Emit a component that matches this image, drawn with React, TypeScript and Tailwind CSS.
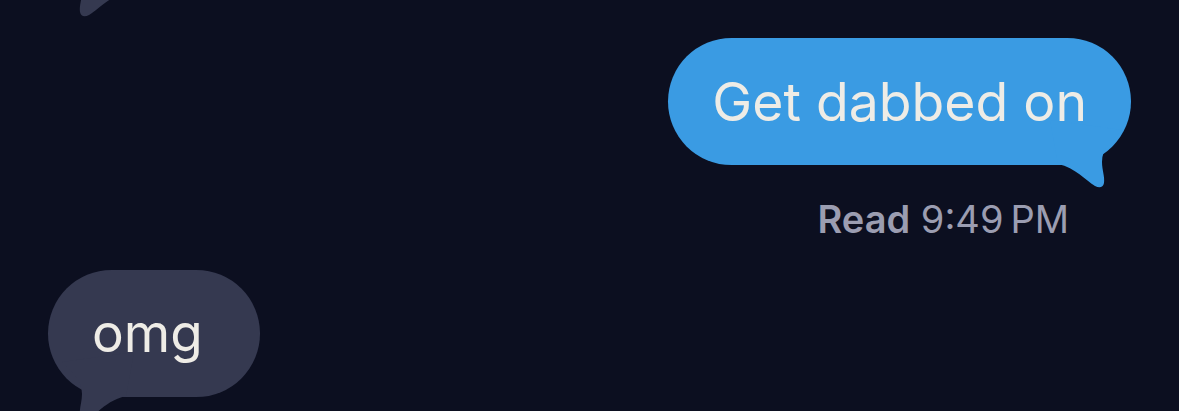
import React from "react";

const font = { fontFamily: "Inter, 'Noto Sans', sans-serif" };

// iMessage style tail, drawn for a right-side bubble (mirrored for the left side)
const Tail = ({ color, className }: { color: string; className: string }) => (
  <svg
    width="80"
    height="70"
    viewBox="0 0 80 70"
    className={"absolute pointer-events-none " + className}
  >
    <path
      d="M0 0 L72 10 C62 20 52 28 52 42 C52 50 55 57 54 63 C53 68 49 68 45 66 C35 60 26 48 8 44 Z"
      fill={color}
    />
  </svg>
);

const SentBubble = ({ text }: { text: string }) => (
  <div className="relative self-end h-[127px] px-[44px] rounded-full bg-[#3a9be3] flex items-center">
    <span className="text-[53.5px] leading-none text-[#eeece6] whitespace-nowrap">{text}</span>
    <Tail color="#3a9be3" className="right-[1px] -bottom-[25px]" />
  </div>
);

const ReceivedBubble = ({ text, className = "" }: { text?: string; className?: string }) => (
  <div
    className={
      "relative self-start h-[127px] w-[212px] pl-[44px] rounded-full bg-[#353950] flex items-center " +
      className
    }
  >
    {text ? (
      <span className="text-[53px] leading-none text-[#eeece6] whitespace-nowrap">{text}</span>
    ) : null}
    <Tail color="#353950" className="left-[6px] -bottom-[25px] -scale-x-100" />
  </div>
);

export default function App() {
  return (
    <div className="w-[1179px] h-[411px] overflow-hidden bg-[#0c0f20]" style={font}>
      <div className="flex flex-col px-[48px]">
        <ReceivedBubble className="-mt-[133px]" />
        <div className="mt-[44px] flex flex-col">
          <SentBubble text="Get dabbed on" />
          <div className="self-end mt-[35px] mr-[62px] text-[38px] leading-none text-[#9b9db1] whitespace-nowrap">
            <span className="font-semibold">Read</span> 9:49{"\u2009"}PM
          </div>
        </div>
        <div className="mt-[32px] flex flex-col">
          <ReceivedBubble text="omg" />
        </div>
      </div>
    </div>
  );
}
